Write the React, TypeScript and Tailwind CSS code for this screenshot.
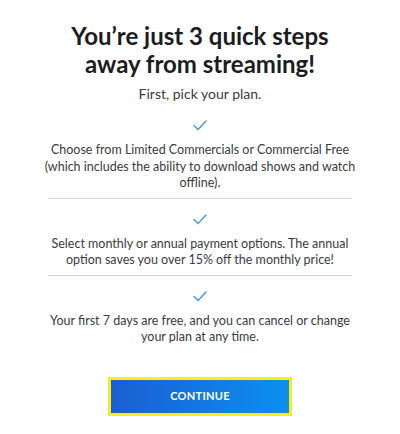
import React from 'react';

const steps = [
  [
    'Choose from Limited Commercials or Commercial Free',
    '(which includes the ability to download shows and watch',
    'offline).',
  ],
  [
    'Select monthly or annual payment options. The annual',
    'option saves you over 15% off the monthly price!',
  ],
  ['Your first 7 days are free, and you can cancel or change', 'your plan at any time.'],
];

const Check: React.FC = () => (
  <svg width="14" height="11" viewBox="0 0 14 11" fill="none">
    <path d="M1 5.5L5 9.5L13 1" stroke="#4597dc" strokeWidth="1.4" strokeLinecap="round" strokeLinejoin="round" />
  </svg>
);

const App: React.FC = () => {
  return (
    <div className="w-[400px] h-[434px] bg-white flex flex-col items-center pt-[22px] text-[#2b2c32] font-['Lato',sans-serif]">
      <h1 className="text-[24px] leading-[28px] font-bold text-center text-[#1c1d22]">
        You’re just 3 quick steps
        <br />
        away from streaming!
      </h1>
      <p className="mt-[7px] text-[14px] leading-[18px] text-[#3a3b40]">First, pick your plan.</p>

      <ul className="mt-[17px] flex flex-col items-center">
        {steps.map((lines, i) => (
          <li key={i} className="flex flex-col items-center">
            <Check />
            <p className="mt-[11px] text-[12.5px] leading-[16.5px] text-center text-[#3a3b40] whitespace-nowrap">
              {lines.map((line, j) => (
                <span key={j} className="block">
                  {line}
                </span>
              ))}
            </p>
            {i < steps.length - 1 && <div className="w-[304px] h-px bg-[#d6d6d6] mt-[6px] mb-[15px]" />}
          </li>
        ))}
      </ul>

      <button className="mt-[31px] w-[184px] h-[39px] border-[3px] border-[#f7ee1e] bg-gradient-to-r from-[#1a5ed2] to-[#0a90f0] text-white text-[11px] font-bold tracking-[0.3px]">
        CONTINUE
      </button>
    </div>
  );
};

export default App;
